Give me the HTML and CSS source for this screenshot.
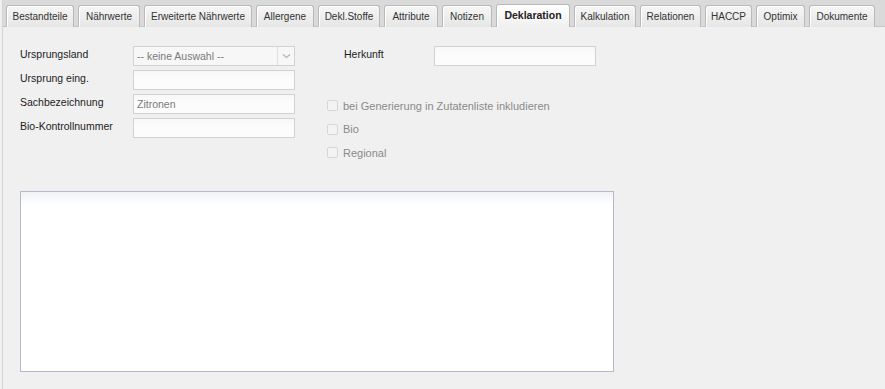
FILE: index.html
```html
<!DOCTYPE html>
<html lang="de">
<head>
  <meta charset="UTF-8">
  <title>Deklaration</title>
  <link rel="stylesheet" href="styles.css">
</head>
<body>
<div class="window">
  <!-- Tab strip -->
  <ul class="tabs">
    <li class="tab">Bestandteile</li>
    <li class="tab">Nährwerte</li>
    <li class="tab">Erweiterte Nährwerte</li>
    <li class="tab">Allergene</li>
    <li class="tab">Dekl.Stoffe</li>
    <li class="tab">Attribute</li>
    <li class="tab">Notizen</li>
    <li class="tab active">Deklaration</li>
    <li class="tab">Kalkulation</li>
    <li class="tab">Relationen</li>
    <li class="tab">HACCP</li>
    <li class="tab">Optimix</li>
    <li class="tab">Dokumente</li>
  </ul>

  <div class="panel">
    <div class="form">
      <div class="col-left">
        <div class="row">
          <span class="label">Ursprungsland</span>
          <div class="field select">
            <span class="value">-- keine Auswahl --</span>
            <span class="arrow">
              <svg width="9" height="6" viewBox="0 0 9 6"><path d="M1 1.5 L4.5 4.5 L8 1.5" fill="none" stroke="#b4b4b4" stroke-width="1.2"/></svg>
            </span>
          </div>
        </div>
        <div class="row">
          <span class="label">Ursprung eing.</span>
          <div class="field"></div>
        </div>
        <div class="row">
          <span class="label">Sachbezeichnung</span>
          <div class="field"><span class="value">Zitronen</span></div>
        </div>
        <div class="row">
          <span class="label">Bio-Kontrollnummer</span>
          <div class="field"></div>
        </div>
      </div>

      <div class="col-right">
        <div class="row">
          <span class="label label-wide">Herkunft</span>
          <div class="field"></div>
        </div>
        <div class="checks">
          <div class="check"><span class="box"></span>bei Generierung in Zutatenliste inkludieren</div>
          <div class="check"><span class="box"></span>Bio</div>
          <div class="check"><span class="box"></span>Regional</div>
        </div>
      </div>
    </div>

    <div class="textarea"></div>
  </div>
</div>
</body>
</html>
```

FILE: styles.css
```css
*, *::before, *::after { box-sizing: border-box; }
body { margin: 0; background: #f0f0f0; font-family: "Liberation Sans", Arial, sans-serif; color: #222; }
.window { height: 389px; margin-left: 2px; border-left: 1px solid #d4d4d4; background: #f0f0f0; }

/* Tabs */
.tabs {
  display: grid;
  grid-template-columns: 68px 62px 108px 58px 62px 54px 50px 74px 62px 61px 47px 49px 66px;
  column-gap: 4px;
  margin: 0;
  padding: 5px 0 0 3px;
  list-style: none;
  height: 27px;
  background: #dadada;
  border-bottom: 1px solid #c6c6c6;
}
.tab {
  height: 22px;
  border: 1px solid #b9b9b9;
  border-bottom: none;
  border-radius: 3px 3px 0 0;
  background: linear-gradient(#f6f6f6, #e6e6e6);
  box-shadow: inset 1px 1px 0 #fff;
  font-size: 10px;
  line-height: 21px;
  text-align: center;
  color: #333;
  white-space: nowrap;
}
.tab.active {
  height: 23px;
  margin-top: -1px;
  background: linear-gradient(#ffffff, #f0f0f0);
  font-weight: bold;
  font-size: 10.5px;
  color: #222;
  position: relative;
  z-index: 1;
}

/* Panel */
.panel { padding: 19px 0 0 17px; }
.form { display: flex; gap: 32px; }
.col-left, .col-right { display: flex; flex-direction: column; gap: 4px; }
.row { display: flex; align-items: center; height: 20px; }
.label { width: 113px; font-size: 10.5px; color: #1c1c24; padding-bottom: 4px; }
.label-wide { width: 107px; padding-left: 17px; }
.field {
  width: 162px;
  height: 20px;
  border: 1px solid #d2d2d2;
  background: linear-gradient(#f7f7f7, #fcfcfc 40%);
  display: flex;
  align-items: center;
}
.field .value { padding-left: 3px; font-size: 10.5px; color: #7a7a7a; }
.select { justify-content: space-between; background: #f7f7f7; }
.select .arrow {
  width: 17px;
  height: 100%;
  border-left: 1px solid #e0e0e0;
  display: flex;
  align-items: center;
  justify-content: center;
}

.checks { margin-top: 24px; }
.check { display: flex; align-items: center; height: 23.5px; font-size: 11px; color: #8a8a8a; }
.box {
  width: 11px;
  height: 11px;
  margin-right: 5px;
  border: 1px solid #d6d6d6;
  border-radius: 2px;
  background: #f3f3f3;
}

.textarea {
  width: 594px;
  height: 181px;
  margin-top: 26px;
  border: 1px solid #b9b9c9;
  background: linear-gradient(#f0f2f4, #fff 12px);
}
```
